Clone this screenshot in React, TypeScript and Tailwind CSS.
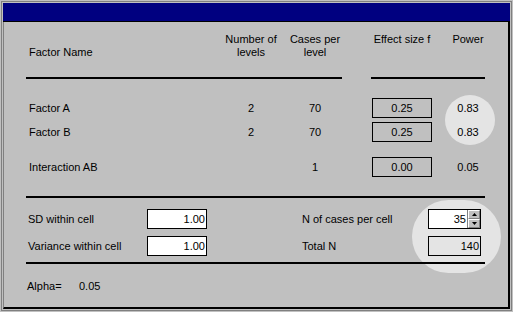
import React from "react";

type RowProps = {
  name: string;
  levels: string;
  cases: string;
  effect: string;
  power: string;
};

const FactorRow = ({ name, levels, cases, effect, power }: RowProps) => (
  <div className="flex items-center h-[20px]">
    <div className="w-[200px] pl-[3px] whitespace-nowrap">{name}</div>
    <div className="w-[50px] text-center">{levels}</div>
    <div className="w-[78px] text-center">{cases}</div>
    <div className="w-[18px]" />
    <div className="w-[60px] h-[20px] border border-black flex items-center justify-center">
      {effect}
    </div>
    <div className="w-[72px] text-center">{power}</div>
  </div>
);

const Spinner = () => (
  <div className="w-[13px] h-full flex flex-col border-l border-[#808080]">
    <div className="flex-1 bg-[#c0c0c0] border-t border-l border-t-white border-l-white border-b border-r border-b-[#808080] border-r-[#808080] flex items-center justify-center">
      <svg width="5" height="3" viewBox="0 0 5 3">
        <path d="M2.5 0 L5 3 L0 3 Z" fill="#000" />
      </svg>
    </div>
    <div className="flex-1 bg-[#c0c0c0] border-t border-l border-t-white border-l-white border-b border-r border-b-[#808080] border-r-[#808080] flex items-center justify-center">
      <svg width="5" height="3" viewBox="0 0 5 3">
        <path d="M0 0 L5 0 L2.5 3 Z" fill="#000" />
      </svg>
    </div>
  </div>
);

const App = () => {
  return (
    <div className="relative w-[513px] h-[312px] bg-[#c0c0c0] p-[1px] overflow-hidden font-['Liberation_Sans',Arial,sans-serif] text-[11px] leading-[13px] text-black">
      {/* highlight marks */}
      <div className="absolute left-[445px] top-[95px] w-[50px] h-[50px] rounded-full bg-[#e4e4e4]" />
      <div className="absolute left-[412px] top-[200px] w-[89px] h-[73px] rounded-full bg-[#e4e4e4]" />

      <div className="relative z-10 h-full border border-[#808080] p-[1px]">
        <div className="h-full flex flex-col">
          <div className="h-[19px] shrink-0 bg-[#000080] border-b border-black" />
          <div className="flex-1 border-l border-[#808080] border-r-2 border-r-black border-b-2 border-b-black pl-[22px] pt-[11px]">
            {/* header */}
            <div className="flex items-start">
              <div className="w-[200px] pl-[3px] mt-[13px]">Factor Name</div>
              <div className="w-[50px] flex flex-col items-center">
                <span className="whitespace-nowrap">Number of</span>
                <span>levels</span>
              </div>
              <div className="w-[78px] flex flex-col items-center">
                <span className="whitespace-nowrap">Cases per</span>
                <span>level</span>
              </div>
              <div className="w-[18px]" />
              <div className="w-[60px] flex justify-center">
                <span className="whitespace-nowrap">Effect size f</span>
              </div>
              <div className="w-[72px] text-center">Power</div>
            </div>

            <div className="flex mt-[18px]">
              <div className="w-[316px] h-[2px] bg-black" />
              <div className="w-[29px]" />
              <div className="w-[114px] h-[2px] bg-black" />
            </div>

            <div className="mt-[19px]">
              <FactorRow name="Factor A" levels="2" cases="70" effect="0.25" power="0.83" />
            </div>
            <div className="mt-[4px]">
              <FactorRow name="Factor B" levels="2" cases="70" effect="0.25" power="0.83" />
            </div>
            <div className="mt-[15px]">
              <FactorRow name="Interaction AB" levels="" cases="1" effect="0.00" power="0.05" />
            </div>

            <div className="mt-[19px] w-[459px] h-[2px] bg-black" />

            <div className="mt-[11px] flex items-center h-[20px]">
              <div className="w-[121px] pl-[2px]">SD within cell</div>
              <div className="w-[60px] h-[20px] bg-white border border-black text-right pr-[1px] leading-[18px]">
                1.00
              </div>
              <div className="w-[95px]" />
              <div className="w-[126px] whitespace-nowrap">N of cases per cell</div>
              <div className="w-[53px] h-[20px] flex border border-black">
                <div className="flex-1 bg-white text-right pr-[1px] leading-[18px]">35</div>
                <Spinner />
              </div>
            </div>

            <div className="mt-[7px] flex items-center h-[20px]">
              <div className="w-[121px] pl-[2px] whitespace-nowrap">Variance within cell</div>
              <div className="w-[60px] h-[20px] bg-white border border-black text-right pr-[1px] leading-[18px]">
                1.00
              </div>
              <div className="w-[95px]" />
              <div className="w-[126px]">Total N</div>
              <div className="w-[53px] h-[20px] border border-black text-right pr-[1px] leading-[18px]">
                140
              </div>
            </div>

            <div className="mt-[6px] w-[459px] h-[2px] bg-black" />

            <div className="mt-[16px] flex">
              <div className="w-[53px] pl-[1px]">Alpha=</div>
              <div>0.05</div>
            </div>
          </div>
        </div>
      </div>
    </div>
  );
};

export default App;
